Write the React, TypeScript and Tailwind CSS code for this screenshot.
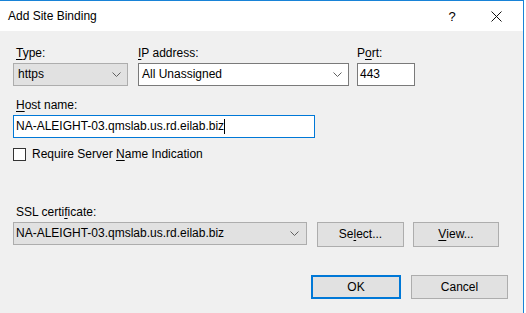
import React from "react";

const Chevron = () => (
  <svg width="9" height="5" viewBox="0 0 9 5" fill="none" className="shrink-0">
    <path d="M0.5 0.5L4.5 4.5L8.5 0.5" stroke="#606060" strokeWidth="1" />
  </svg>
);

function Label({ pre = "", u, post }: { pre?: string; u: string; post: string }) {
  return (
    <div className="h-[15px] leading-[15px]">
      {pre}
      <span className="underline underline-offset-2">{u}</span>
      {post}
    </div>
  );
}

export default function App() {
  return (
    <div className="w-[526px] h-[313px] bg-white overflow-hidden text-[12px] leading-[15px] text-black font-['Segoe_UI','Liberation_Sans',Arial,sans-serif]">
      <div className="w-[524px] h-full border-t border-r border-[#1883d7] flex flex-col">
        {/* title bar */}
        <div className="h-[30px] flex items-center pl-[8px] bg-white">
          <span className="flex-1 pt-[1px]">Add Site Binding</span>
          <span className="w-[14px] text-center mr-[32px] text-[13px]">?</span>
          <svg width="11" height="11" viewBox="0 0 11 11" className="mr-[21px]">
            <path d="M0.5 0.5L10.5 10.5M10.5 0.5L0.5 10.5" stroke="#111" strokeWidth="1" />
          </svg>
        </div>

        {/* body */}
        <div className="flex-1 bg-[#f0f0f0] pl-[13px] pt-[15px]">
          <div className="flex gap-[10px]">
            <div className="w-[115px] flex flex-col gap-[2px]">
              <div className="pl-[3px]">
                <Label u="T" post="ype:" />
              </div>
              <div className="h-[23px] bg-[#e1e1e1] border border-[#adadad] flex items-center pl-[4px] pr-[6px]">
                <span className="flex-1">https</span>
                <Chevron />
              </div>
            </div>
            <div className="w-[211px] flex flex-col gap-[2px]">
              <Label u="I" post="P address:" />
              <div className="h-[23px] bg-white border border-[#7a7a7a] flex items-center pl-[3px] pr-[6px]">
                <span className="flex-1">All Unassigned</span>
                <Chevron />
              </div>
            </div>
            <div className="w-[58px] ml-[-2px] flex flex-col gap-[2px]">
              <Label pre="P" u="o" post="rt:" />
              <div className="h-[23px] bg-white border border-[#7a7a7a] flex items-center pl-[2px]">
                443
              </div>
            </div>
          </div>

          <div className="mt-[12px] flex flex-col gap-[2px] w-[302px]">
            <div className="pl-[3px]">
              <Label u="H" post="ost name:" />
            </div>
            <div className="h-[23px] bg-white border border-[#0078d7] flex items-center pl-[2px]">
              <span>NA-ALEIGHT-03.qmslab.us.rd.eilab.biz</span>
              <span className="w-[1px] h-[15px] bg-black" />
            </div>
          </div>

          <div className="mt-[9px] h-[15px] flex items-center gap-[6px]">
            <div className="w-[13px] h-[13px] bg-white border border-[#333]" />
            <span>
              Require Server <span className="underline underline-offset-2">N</span>ame Indication
            </span>
          </div>

          <div className="mt-[43px] pl-[3px]">
            <Label pre="SSL certi" u="f" post="icate:" />
          </div>
          <div className="mt-[2px] flex items-start">
            <div className="w-[294px] h-[23px] bg-[#e1e1e1] border border-[#adadad] flex items-center pl-[2px] pr-[7px]">
              <span className="flex-1">NA-ALEIGHT-03.qmslab.us.rd.eilab.biz</span>
              <Chevron />
            </div>
            <button className="ml-[10px] w-[87px] h-[25px] bg-[#e1e1e1] border border-[#adadad] flex items-center justify-center">
              Se<span className="underline underline-offset-2">l</span>ect...
            </button>
            <button className="ml-[9px] w-[86px] h-[25px] bg-[#e1e1e1] border border-[#adadad] flex items-center justify-center">
              <span className="underline underline-offset-2">V</span>iew...
            </button>
          </div>

          <div className="mt-[28px] flex justify-end pr-[15px] gap-[10px]">
            <button className="w-[90px] h-[24px] bg-[#e1e1e1] border-2 border-[#0078d7] flex items-center justify-center">
              OK
            </button>
            <button className="w-[97px] h-[24px] bg-[#e1e1e1] border border-[#adadad] flex items-center justify-center">
              Cancel
            </button>
          </div>
        </div>
      </div>
    </div>
  );
}
